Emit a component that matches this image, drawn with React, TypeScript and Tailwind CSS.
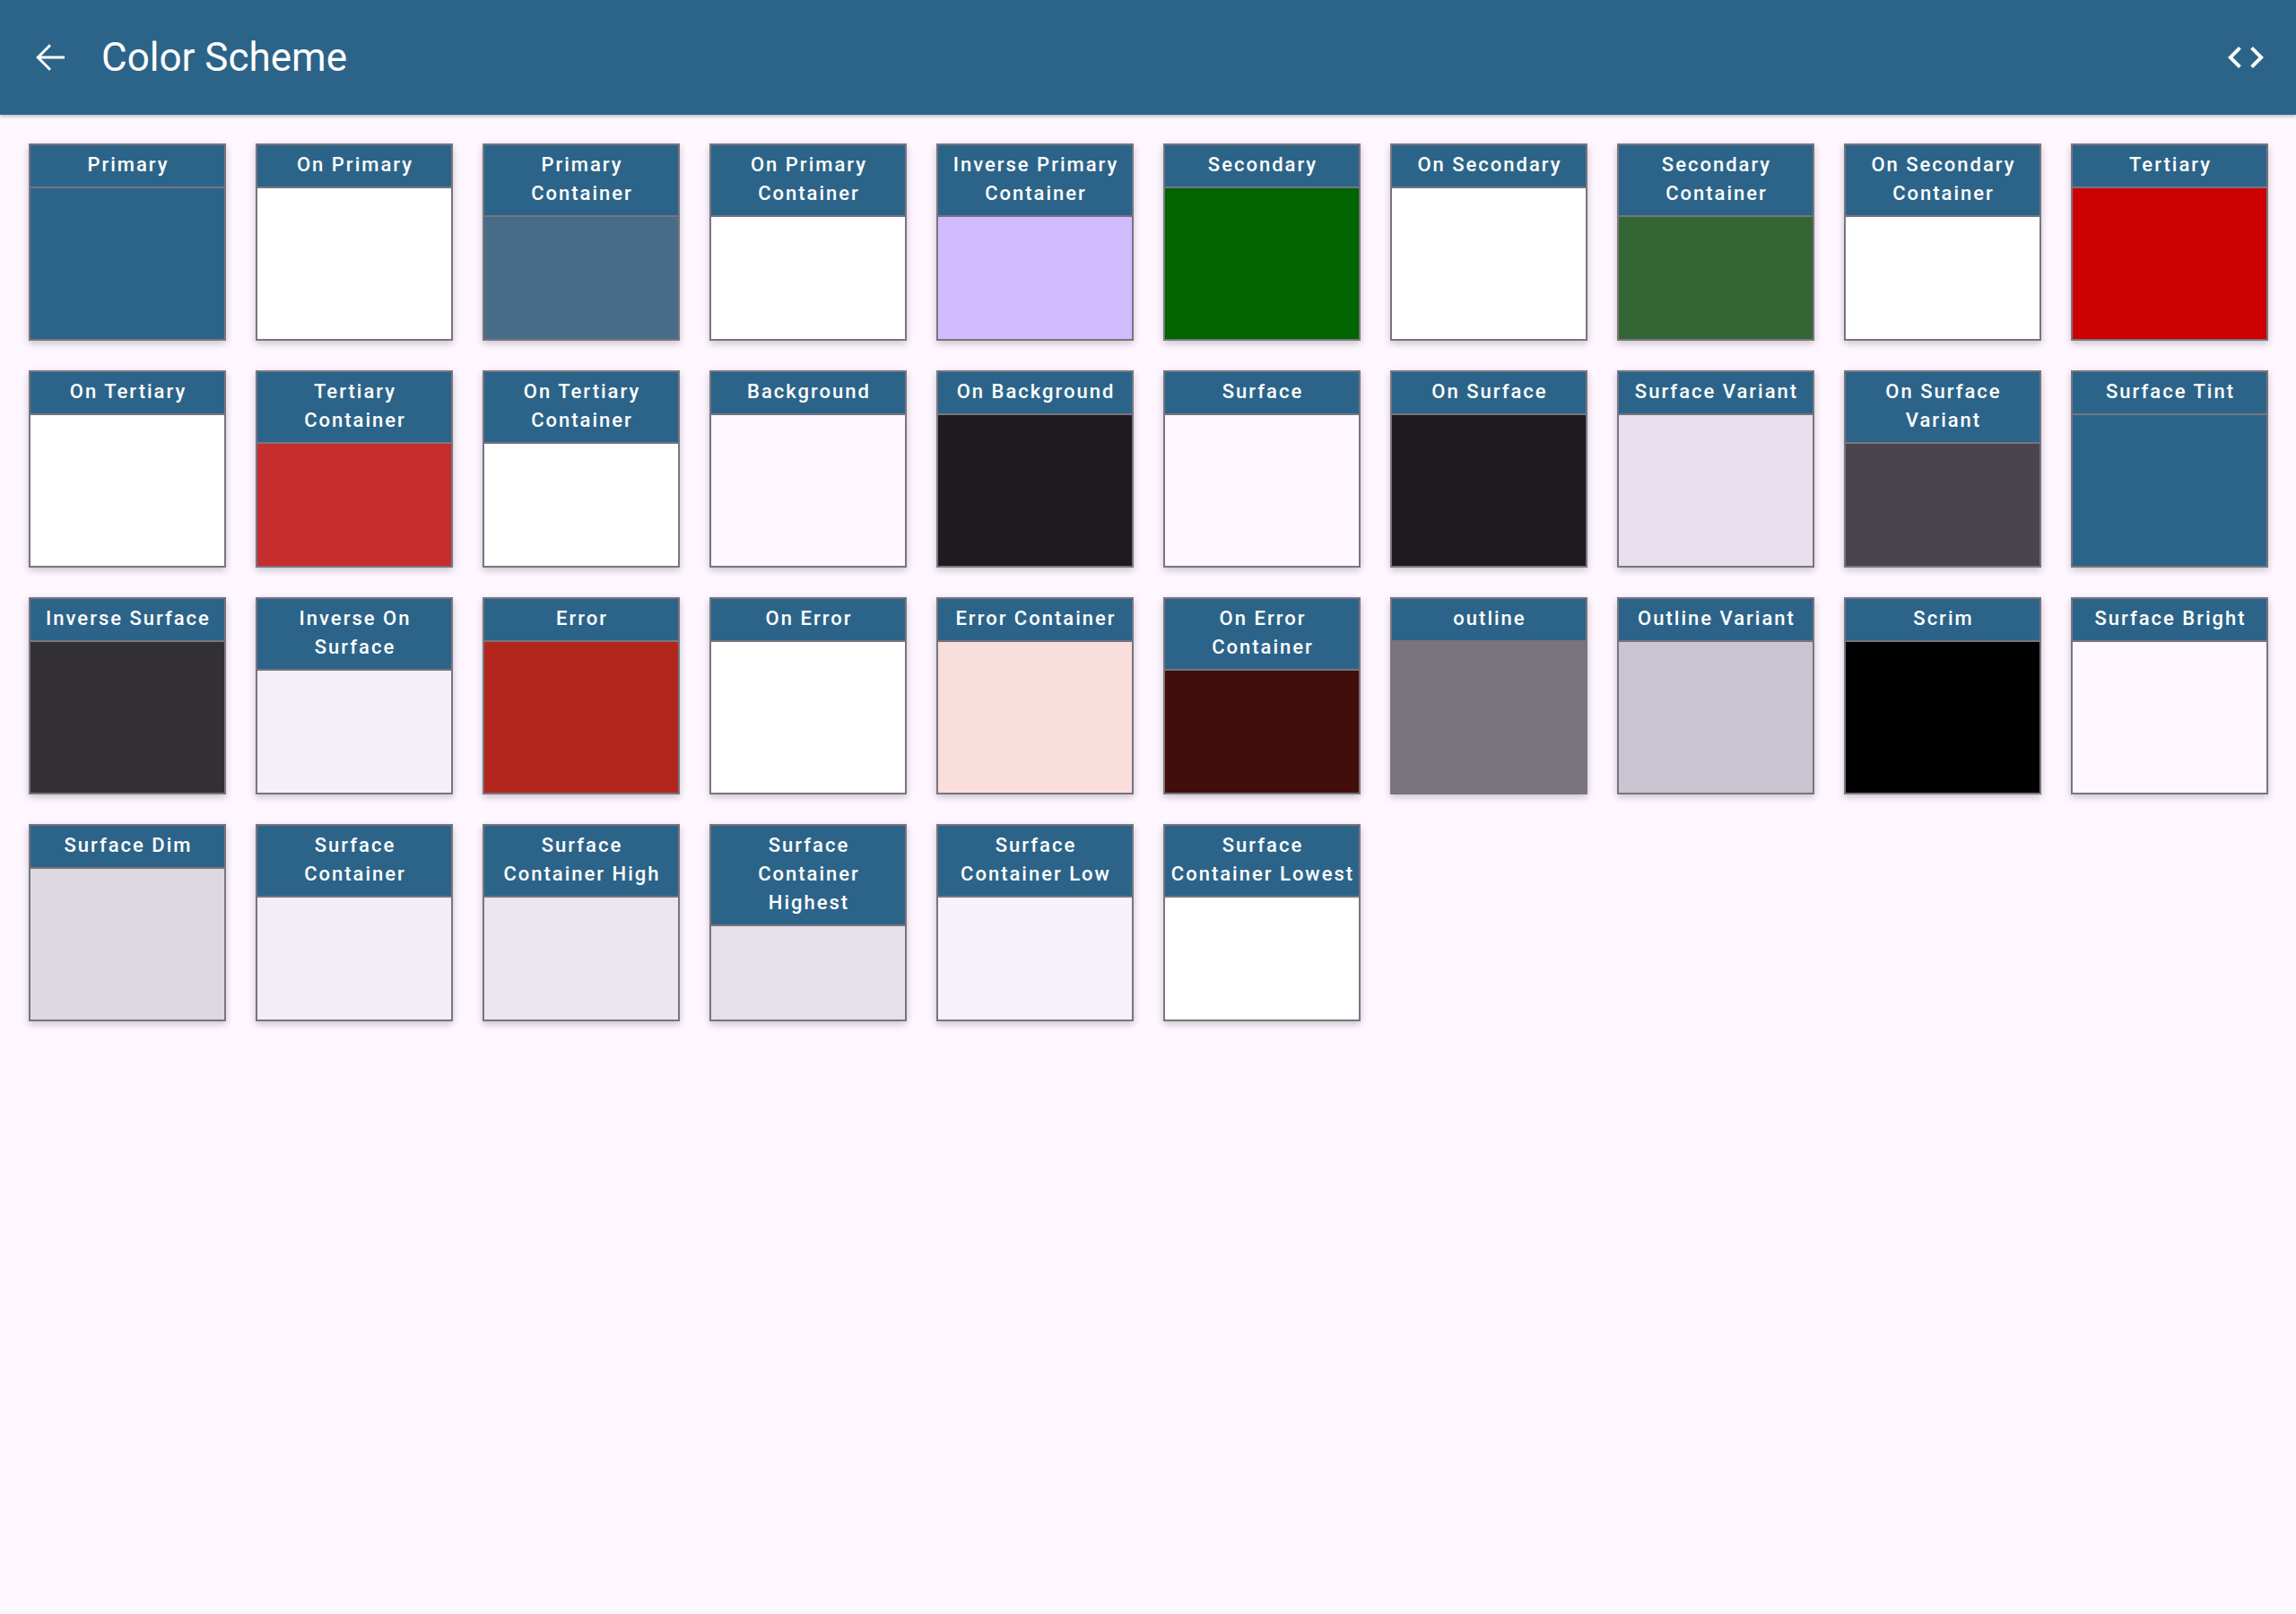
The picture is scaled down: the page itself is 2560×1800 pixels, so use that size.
const swatches: { name: string; color: string }[] = [
  { name: "Primary", color: "#2c6489" },
  { name: "On Primary", color: "#ffffff" },
  { name: "Primary Container", color: "#466c88" },
  { name: "On Primary Container", color: "#ffffff" },
  { name: "Inverse Primary Container", color: "#d0bcff" },
  { name: "Secondary", color: "#006400" },
  { name: "On Secondary", color: "#ffffff" },
  { name: "Secondary Container", color: "#336633" },
  { name: "On Secondary Container", color: "#ffffff" },
  { name: "Tertiary", color: "#cc0000" },
  { name: "On Tertiary", color: "#ffffff" },
  { name: "Tertiary Container", color: "#c62e2e" },
  { name: "On Tertiary Container", color: "#ffffff" },
  { name: "Background", color: "#fef7ff" },
  { name: "On Background", color: "#1d1b20" },
  { name: "Surface", color: "#fef7ff" },
  { name: "On Surface", color: "#1d1b20" },
  { name: "Surface Variant", color: "#e7e0ec" },
  { name: "On Surface Variant", color: "#49454f" },
  { name: "Surface Tint", color: "#2c6489" },
  { name: "Inverse Surface", color: "#322f35" },
  { name: "Inverse On Surface", color: "#f5eff7" },
  { name: "Error", color: "#b3261e" },
  { name: "On Error", color: "#ffffff" },
  { name: "Error Container", color: "#f9dedc" },
  { name: "On Error Container", color: "#410e0b" },
  { name: "outline", color: "#79747e" },
  { name: "Outline Variant", color: "#cac4d0" },
  { name: "Scrim", color: "#000000" },
  { name: "Surface Bright", color: "#fef7ff" },
  { name: "Surface Dim", color: "#ded8e1" },
  { name: "Surface Container", color: "#f3edf7" },
  { name: "Surface Container High", color: "#ece6f0" },
  { name: "Surface Container Highest", color: "#e6e0e9" },
  { name: "Surface Container Low", color: "#f7f2fa" },
  { name: "Surface Container Lowest", color: "#ffffff" },
];

function ColorCard({ name, color }: { name: string; color: string }) {
  return (
    <div className="flex h-[220px] w-[220px] flex-col border-2 border-[#79747e] shadow-[0_3px_8px_rgba(0,0,0,0.22)]">
      <div className="border-b-2 border-[#79747e] bg-[#2c6489] pl-[5px] pr-[3px] pt-[6px] pb-[8px] text-center text-[22px] leading-[32px] font-medium tracking-[2px] text-white">
        {name}
      </div>
      {/* swatch colour comes from data */}
      <div className="flex-1" style={{ backgroundColor: color }} />
    </div>
  );
}

export default function App() {
  return (
    <div className="min-h-[1800px] bg-[#fef7ff] font-['Roboto',sans-serif]">
      {/* TOP BAR */}
      <header className="flex h-[128px] items-center bg-[#2c6489] pl-8 pr-8 text-white shadow-[0_2px_4px_rgba(0,0,0,0.25)]">
        <button className="flex h-12 w-12 items-center justify-center">
          <svg width="48" height="48" viewBox="0 0 24 24" fill="currentColor">
            <path d="M20 11.25H6.9l5.6-5.6L11.45 4.6 4.05 12l7.4 7.4 1.05-1.05-5.6-5.6H20v-1.5z" />
          </svg>
        </button>
        <h1 className="ml-[33px] text-[44px] leading-none font-normal">Color Scheme</h1>
        <button className="ml-auto flex h-12 w-12 items-center justify-center">
          <svg width="48" height="48" viewBox="0 0 24 24" fill="currentColor">
            <path d="M9.4 16.6L4.8 12l4.6-4.6L8 6l-6 6 6 6 1.4-1.4zm5.2 0l4.6-4.6-4.6-4.6L16 6l6 6-6 6-1.4-1.4z" />
          </svg>
        </button>
      </header>

      {/* SWATCH GRID */}
      <div className="grid grid-cols-[repeat(10,220px)] gap-[33px] px-8 pt-8">
        {swatches.map((s) => (
          <ColorCard key={s.name} name={s.name} color={s.color} />
        ))}
      </div>
    </div>
  );
}
